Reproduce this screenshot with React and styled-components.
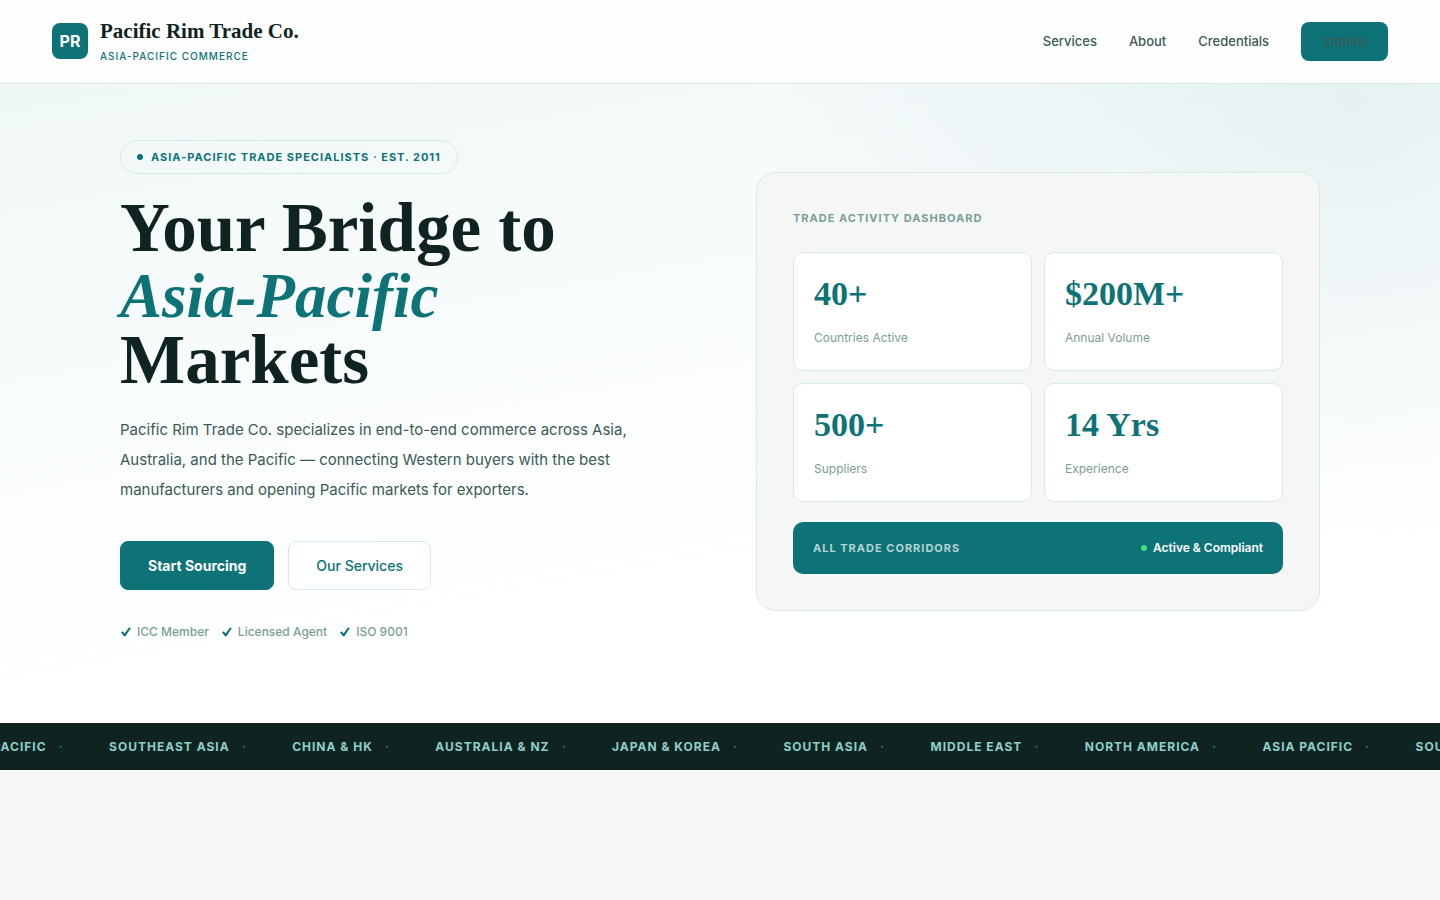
import styled, { createGlobalStyle } from "styled-components";

const teal = "#0d7377";
const ink = "#0f2421";
const body = "#3a5a54";
const muted = "#7a9e97";
const line = "#d8eae8";
const mist = "#f5f7f7";

const sans = `Inter, "Liberation Sans", sans-serif`;
const serif = `"Liberation Serif", "Times New Roman", serif`;

const GlobalStyle = createGlobalStyle`
  *, *::before, *::after {
    box-sizing: border-box;
  }
  body {
    margin: 0;
    background: ${mist};
    color: ${ink};
    font-family: ${sans};
    overflow-x: hidden;
    -webkit-font-smoothing: antialiased;
  }
  a {
    text-decoration: none;
  }
`;

const Header = styled.header`
  display: flex;
  align-items: center;
  justify-content: space-between;
  padding: 16px 52px 17px;
  background: #fefefe;
  border-bottom: 1px solid ${line};
`;

const Brand = styled.a`
  display: flex;
  align-items: center;
  gap: 12px;
`;

const BrandMark = styled.span`
  width: 36px;
  height: 36px;
  display: flex;
  align-items: center;
  justify-content: center;
  border-radius: 8px;
  background: ${teal};
  color: #fff;
  font-size: 16px;
  font-weight: 700;
`;

const BrandText = styled.span`
  display: flex;
  flex-direction: column;
`;

const BrandName = styled.span`
  font-family: ${serif};
  font-size: 21px;
  font-weight: 700;
  line-height: 30px;
  color: ${ink};
`;

const BrandTag = styled.span`
  font-size: 10px;
  font-weight: 500;
  line-height: 20px;
  letter-spacing: 1px;
  text-transform: uppercase;
  color: ${teal};
`;

const Nav = styled.nav`
  display: flex;
  align-items: center;
  gap: 32px;
  a {
    font-size: 13px;
    font-weight: 500;
    line-height: 23px;
    color: ${body};
  }
`;

const InquireLink = styled.a`
  padding: 8px 22px;
  border-radius: 8px;
  background: ${teal};
`;

const Hero = styled.section`
  padding: 56px 120px 80px;
  background:
    radial-gradient(ellipse 40% 70% at 94% 4%, rgba(13, 115, 119, 0.07), transparent),
    linear-gradient(170deg, #f0f7f7 0%, #f9fcfd 38%, #fff 72%);
`;

const HeroInner = styled.div`
  max-width: 1200px;
  margin: 0 auto;
  display: grid;
  grid-template-columns: 1fr 1fr;
  align-items: center;
  gap: 72px;
`;

const Pill = styled.div`
  width: fit-content;
  display: flex;
  align-items: center;
  gap: 8px;
  padding: 6px 16px;
  border: 1px solid ${line};
  border-radius: 20px;
  font-size: 11px;
  font-weight: 700;
  line-height: 20px;
  letter-spacing: 1px;
  text-transform: uppercase;
  color: ${teal};
`;

const Dot = styled.span`
  width: 6px;
  height: 6px;
  border-radius: 50%;
  background: ${({ color }) => color};
`;

const Title = styled.h1`
  margin: 21px 0 22px;
  font-family: ${serif};
  font-size: 69px;
  font-weight: 700;
  line-height: 66px;
  color: ${ink};
  em {
    font-size: 63px;
    line-height: 60px;
    color: ${teal};
  }
`;

const Lead = styled.p`
  max-width: 540px;
  margin: 0 0 36px;
  font-size: 15px;
  line-height: 30px;
  color: ${body};
`;

const Actions = styled.div`
  display: flex;
  gap: 14px;
  margin-bottom: 30px;
`;

const Button = styled.button`
  padding: 12px 27px;
  border: 1px solid ${({ $outline }) => ($outline ? line : teal)};
  border-radius: 8px;
  background: ${({ $outline }) => ($outline ? "#fff" : teal)};
  color: ${({ $outline }) => ($outline ? teal : "#fff")};
  font-family: ${sans};
  font-size: 14px;
  font-weight: ${({ $outline }) => ($outline ? 500 : 700)};
  line-height: 23px;
  cursor: pointer;
`;

const Badges = styled.ul`
  display: flex;
  gap: 12px;
  margin: 0;
  padding: 0;
  list-style: none;
`;

const Badge = styled.li`
  display: flex;
  align-items: center;
  gap: 5px;
  font-size: 12px;
  font-weight: 500;
  line-height: 23px;
  color: ${muted};
`;

const Panel = styled.div`
  padding: 36px;
  border: 1px solid ${line};
  border-radius: 20px;
  background: ${mist};
`;

const PanelTitle = styled.h2`
  margin: 0 0 24px;
  font-size: 11px;
  font-weight: 700;
  line-height: 19px;
  letter-spacing: 1px;
  text-transform: uppercase;
  color: ${muted};
`;

const StatGrid = styled.div`
  display: grid;
  grid-template-columns: 1fr 1fr;
  gap: 12px;
  margin-bottom: 20px;
`;

const Stat = styled.div`
  padding: 20px 20px 22px;
  border: 1px solid ${line};
  border-radius: 10px;
  background: #fff;
`;

const StatValue = styled.div`
  margin-bottom: 12px;
  font-family: ${serif};
  font-size: 34px;
  font-weight: 700;
  line-height: 42px;
  color: ${teal};
`;

const StatLabel = styled.div`
  font-size: 12px;
  line-height: 21px;
  color: ${muted};
`;

const StatusBar = styled.div`
  display: flex;
  align-items: center;
  justify-content: space-between;
  padding: 16px 20px;
  border-radius: 10px;
  background: ${teal};
  line-height: 20px;
`;

const StatusLabel = styled.span`
  font-size: 11px;
  font-weight: 700;
  letter-spacing: 1px;
  text-transform: uppercase;
  color: rgba(255, 255, 255, 0.7);
`;

const StatusValue = styled.span`
  display: flex;
  align-items: center;
  gap: 6px;
  font-size: 12px;
  font-weight: 600;
  color: #fff;
`;

const Ticker = styled.div`
  overflow: hidden;
  padding: 13px 0;
  background: ${ink};
`;

const TickerTrack = styled.div`
  display: flex;
  gap: 45px;
  width: max-content;
  margin-left: -44px;
`;

const TickerItem = styled.span`
  display: flex;
  gap: 12px;
  font-size: 12px;
  font-weight: 700;
  line-height: 21px;
  letter-spacing: 1px;
  text-transform: uppercase;
  white-space: nowrap;
  color: #8ecfc9;
  i {
    font-style: normal;
    font-weight: 900;
    color: ${teal};
  }
`;

const stats = [
  { value: "40+", label: "Countries Active" },
  { value: "$200M+", label: "Annual Volume" },
  { value: "500+", label: "Suppliers" },
  { value: "14 Yrs", label: "Experience" },
];

const badges = ["ICC Member", "Licensed Agent", "ISO 9001"];

const regions = [
  "Asia Pacific",
  "Southeast Asia",
  "China & HK",
  "Australia & NZ",
  "Japan & Korea",
  "South Asia",
  "Middle East",
  "North America",
];

const CheckIcon = () => (
  <svg width="12" height="12" viewBox="0 0 12 12" aria-hidden="true">
    <path d="M1 6.4 2.7 5.3 4.6 7.6 9 1.6 10.9 2.1 5.4 10.2 4 10.2Z" fill={teal} />
  </svg>
);

export default function App() {
  return (
    <>
      <GlobalStyle />
      <Header>
        <Brand href="#">
          <BrandMark>PR</BrandMark>
          <BrandText>
            <BrandName>Pacific Rim Trade Co.</BrandName>
            <BrandTag>Asia-Pacific Commerce</BrandTag>
          </BrandText>
        </Brand>
        <Nav>
          <a href="#services">Services</a>
          <a href="#about">About</a>
          <a href="#credentials">Credentials</a>
          <InquireLink href="#contact">Inquire</InquireLink>
        </Nav>
      </Header>
      <main>
        <Hero>
          <HeroInner>
            <div>
              <Pill>
                <Dot color={teal} />
                Asia-Pacific Trade Specialists · Est. 2011
              </Pill>
              <Title>
                Your Bridge to
                <br />
                <em>Asia-Pacific</em>
                <br />
                Markets
              </Title>
              <Lead>
                Pacific Rim Trade Co. specializes in end-to-end commerce across Asia,
                Australia, and the Pacific — connecting Western buyers with the best
                manufacturers and opening Pacific markets for exporters.
              </Lead>
              <Actions>
                <Button type="button">Start Sourcing</Button>
                <Button type="button" $outline>
                  Our Services
                </Button>
              </Actions>
              <Badges>
                {badges.map((badge) => (
                  <Badge key={badge}>
                    <CheckIcon />
                    {badge}
                  </Badge>
                ))}
              </Badges>
            </div>
            <Panel>
              <PanelTitle>Trade Activity Dashboard</PanelTitle>
              <StatGrid>
                {stats.map(({ value, label }) => (
                  <Stat key={label}>
                    <StatValue>{value}</StatValue>
                    <StatLabel>{label}</StatLabel>
                  </Stat>
                ))}
              </StatGrid>
              <StatusBar>
                <StatusLabel>All Trade Corridors</StatusLabel>
                <StatusValue>
                  <Dot color="#4ade80" />
                  Active &amp; Compliant
                </StatusValue>
              </StatusBar>
            </Panel>
          </HeroInner>
        </Hero>
        <Ticker>
          <TickerTrack>
            {[...regions, ...regions].map((region, i) => (
              <TickerItem key={i}>
                {region}
                <i>·</i>
              </TickerItem>
            ))}
          </TickerTrack>
        </Ticker>
      </main>
    </>
  );
}
